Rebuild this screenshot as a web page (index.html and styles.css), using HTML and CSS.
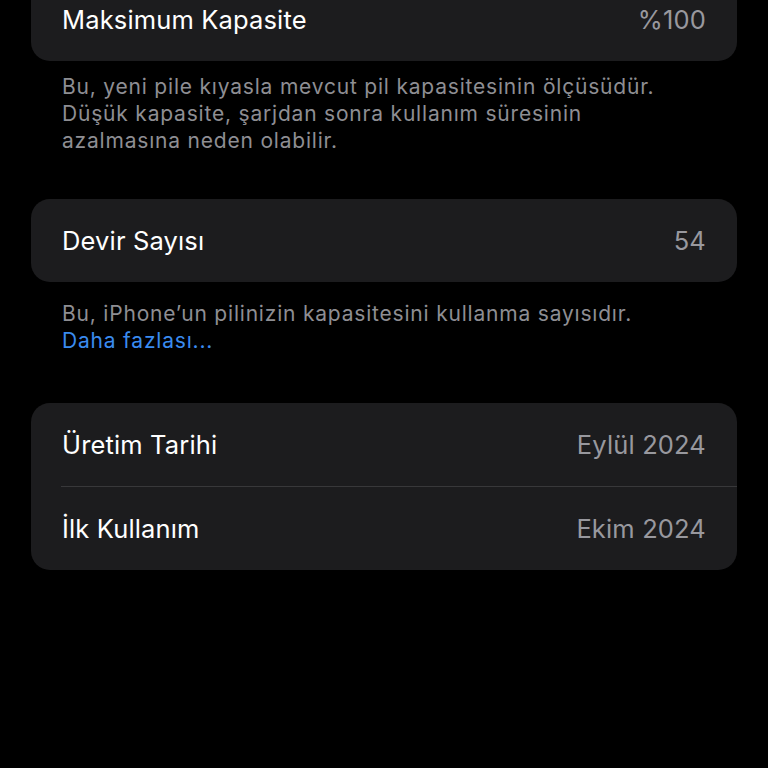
FILE: index.html
```html
<!DOCTYPE html>
<html lang="tr">
<head>
<meta charset="utf-8">
<title>Pil Durumu</title>
<link rel="stylesheet" href="styles.css">
</head>
<body>
<main class="page">
  <section class="card card-first">
    <div class="row">
      <span class="label">Maksimum Kapasite</span>
      <span class="value">%100</span>
    </div>
  </section>
  <p class="footer footer-first">Bu, yeni pile kıyasla mevcut pil kapasitesinin ölçüsüdür.<br>Düşük kapasite, şarjdan sonra kullanım süresinin<br>azalmasına neden olabilir.</p>

  <section class="card">
    <div class="row">
      <span class="label">Devir Sayısı</span>
      <span class="value">54</span>
    </div>
  </section>
  <p class="footer footer-second">Bu, iPhone’un pilinizin kapasitesini kullanma sayısıdır.<br><a class="link" href="#">Daha fazlası...</a></p>

  <section class="card">
    <div class="row">
      <span class="label">Üretim Tarihi</span>
      <span class="value">Eylül 2024</span>
    </div>
    <div class="row row-sep">
      <span class="label">İlk Kullanım</span>
      <span class="value">Ekim 2024</span>
    </div>
  </section>
</main>
</body>
</html>
```

FILE: styles.css
```css
html, body {
  margin: 0;
  padding: 0;
  background: #000;
}
body {
  font-family: Inter, "Noto Sans", sans-serif;
  color: #fff;
  width: 768px;
  height: 768px;
  overflow: hidden;
}
.page {
  padding: 0 31px;
}
.card {
  background: #1c1c1e;
  border-radius: 19px;
  overflow: hidden;
}
.card-first {
  margin-top: -22px;
}
.row {
  height: 83px;
  display: flex;
  align-items: center;
  justify-content: space-between;
  padding: 0 31px;
}
.row-sep {
  border-top: 1px solid #38383a;
  margin-left: 30px;
  padding-left: 1px;
}
.label {
  font-size: 25.5px;
  letter-spacing: 0.15px;
  color: #fff;
}
.value {
  font-size: 25.5px;
  letter-spacing: 0.15px;
  color: #98989e;
}
.footer {
  margin: 0;
  padding: 0 31px;
  font-size: 21px;
  line-height: 27px;
  color: #8e8e93;
  letter-spacing: 0.8px;
  white-space: nowrap;
}
.footer-first {
  padding-top: 12px;
  padding-bottom: 45px;
}
.footer-second {
  padding-top: 18px;
  padding-bottom: 49px;
}
.link {
  color: #3a8bef;
  text-decoration: none;
}
```
